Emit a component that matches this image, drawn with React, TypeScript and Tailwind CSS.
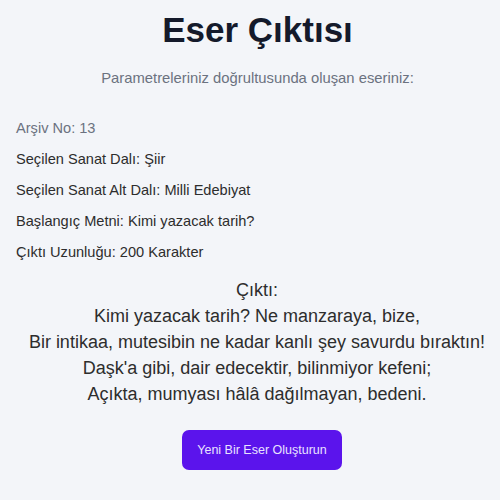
import React from "react";

const params = [
  { label: "Arşiv No: 13", muted: true },
  { label: "Seçilen Sanat Dalı: Şiir" },
  { label: "Seçilen Sanat Alt Dalı: Milli Edebiyat" },
  { label: "Başlangıç Metni: Kimi yazacak tarih?" },
  { label: "Çıktı Uzunluğu: 200 Karakter" },
];

const poem = [
  "Kimi yazacak tarih? Ne manzaraya, bize,",
  "Bir intikaa, mutesibin ne kadar kanlı şey savurdu bıraktın!",
  "Daşk'a gibi, dair edecektir, bilinmiyor kefeni;",
  "Açıkta, mumyası hâlâ dağılmayan, bedeni.",
];

export default function App() {
  return (
    <div className="w-[500px] h-[500px] bg-[#f3f5f9] font-['Liberation_Sans',Arial,sans-serif] flex flex-col overflow-hidden">
      <div className="pl-[15px] flex flex-col items-center">
        <h1 className="text-center text-[35px] font-bold text-[#141a2b] leading-none mt-[12px]">
          Eser Çıktısı
        </h1>
        <p className="text-center text-[14.8px] text-[#6b7280] mt-[20px]">
          Parametreleriniz doğrultusunda oluşan eseriniz:
        </p>
      </div>

      <div className="flex flex-col gap-[14px] px-4 mt-[31px]">
        {params.map((p) => (
          <div
            key={p.label}
            className={`text-[14.6px] leading-[17px] ${p.muted ? "text-[#6b7280]" : "text-[#2d2d2d]"}`}
          >
            {p.label}
          </div>
        ))}
      </div>

      <div className="pl-[14px] flex flex-col items-center mt-[16px] text-[18px] leading-[26px] text-[#2d2d2d] text-center">
        <div>Çıktı:</div>
        {poem.map((line) => (
          <div key={line}>{line}</div>
        ))}
      </div>

      <div className="pl-[24px] flex justify-center mt-[23px]">
        <button className="w-[160px] h-[40px] rounded-[7px] bg-[#5b14ec] text-[#e9e2ff] text-[12.5px]">
          Yeni Bir Eser Oluşturun
        </button>
      </div>
    </div>
  );
}
